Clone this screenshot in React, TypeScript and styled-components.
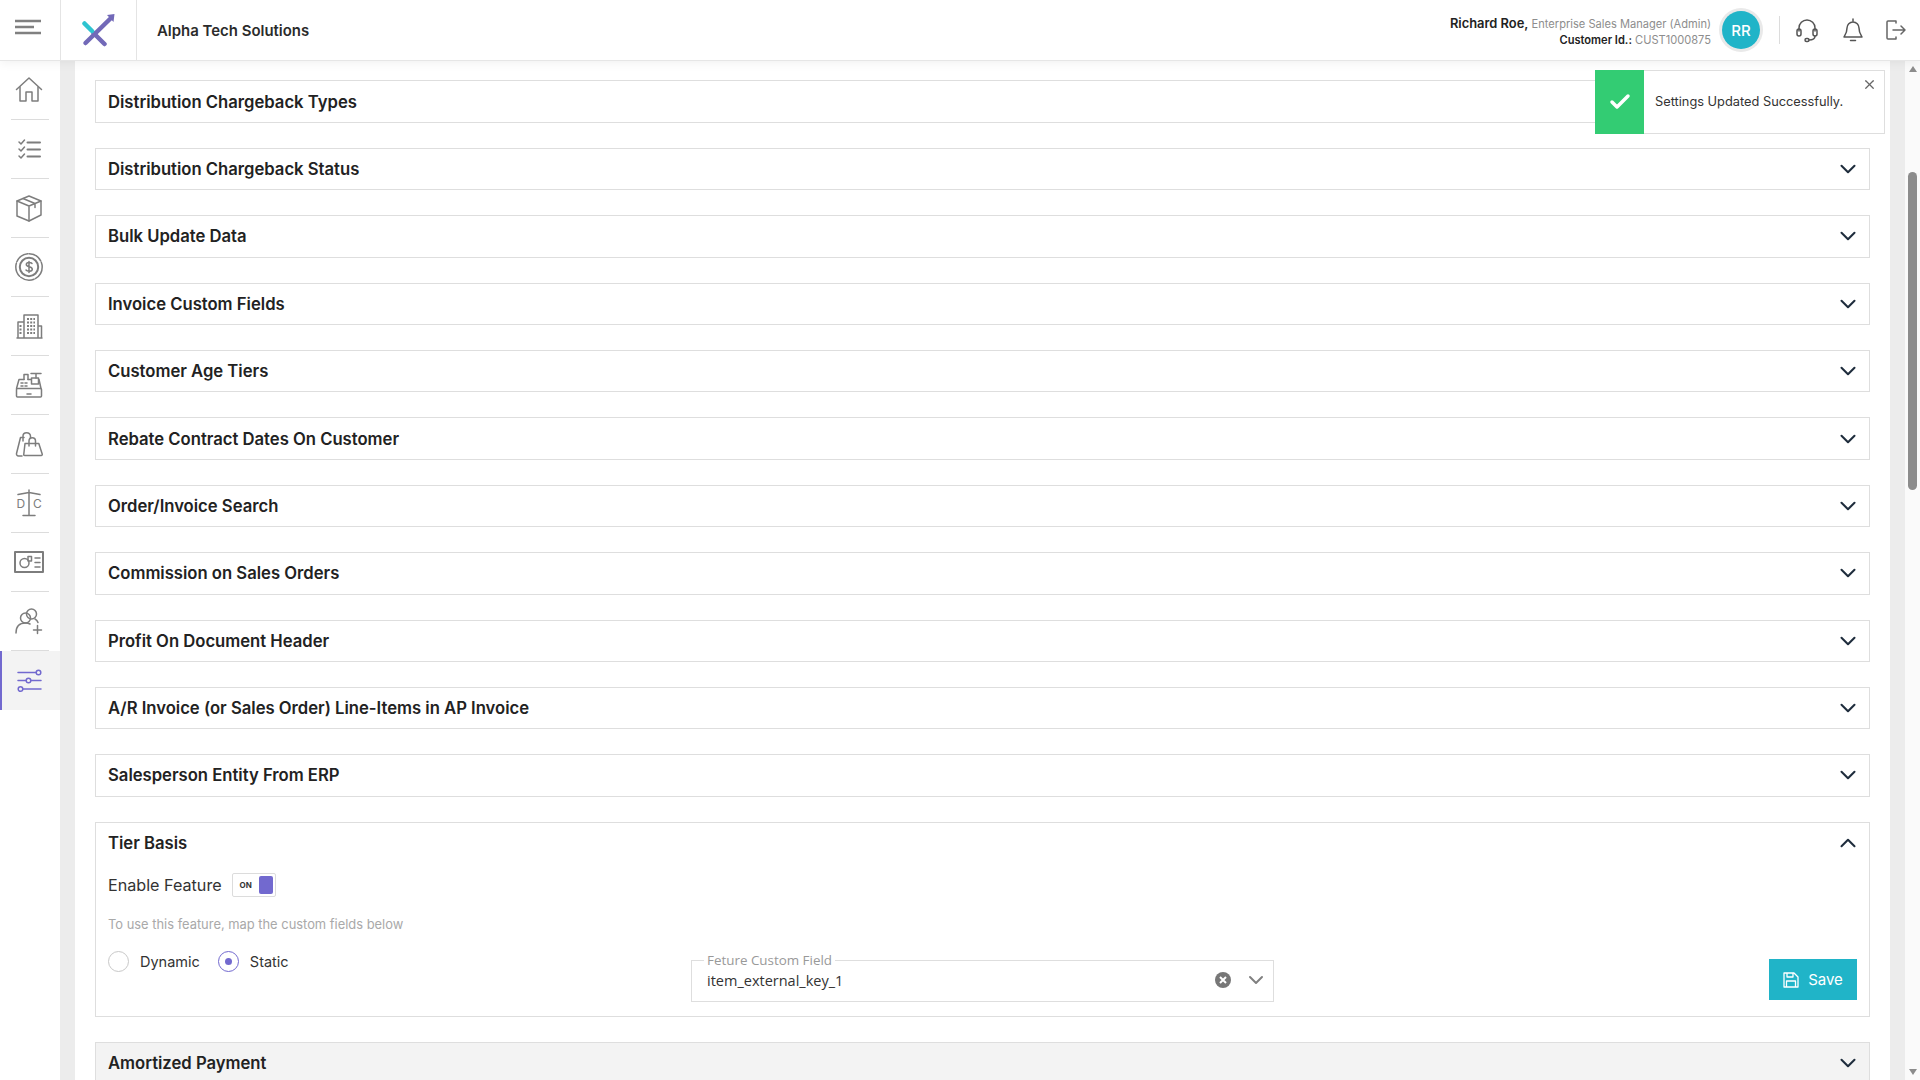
import type { ReactNode } from 'react';
import styled, { createGlobalStyle } from 'styled-components';
import { ChevronDown, ChevronUp, X, Check } from 'lucide-react';

const GlobalStyle = createGlobalStyle`
  html, body {
    margin: 0;
    padding: 0;
    height: 100%;
    overflow: hidden;
    background: #fff;
    font-family: 'Inter', 'Liberation Sans', sans-serif;
    color: #222;
  }
  * { box-sizing: border-box; }
`;

const Page = styled.div`
  width: 1920px;
  height: 1080px;
  display: flex;
  flex-direction: column;
  overflow: hidden;
  position: relative;
`;

const Header = styled.header`
  height: 61px;
  flex-shrink: 0;
  display: flex;
  align-items: stretch;
  background: #fff;
  border-bottom: 1px solid #e6e6e6;
  position: relative;
  z-index: 2;
  box-shadow: 0 2px 10px rgba(0, 0, 0, 0.06);
`;

const MenuCell = styled.div`
  width: 61px;
  border-right: 1px solid #e4e4e4;
  display: flex;
  align-items: center;
  justify-content: center;
  padding-bottom: 7px;
  padding-right: 4px;
`;

const LogoCell = styled.div`
  width: 76px;
  border-right: 1px solid #e4e4e4;
  display: flex;
  align-items: center;
  justify-content: center;
`;

const Company = styled.div`
  margin: 2px 0 0 20px;
  align-self: center;
  font-size: 14.950px;
  font-weight: 600;
  color: #2b2b2b;
`;

const UserArea = styled.div`
  margin-left: auto;
  display: flex;
  align-items: center;
`;

const UserText = styled.div`
  text-align: right;
  line-height: 16px;
  font-size: 11.100px;
  color: #8d8d8d;
  margin-right: 11px;
  padding-top: 3px;
  b { color: #222; font-weight: 600; }
  .name { font-size: 12.900px; }
`;

const Avatar = styled.div`
  width: 38px;
  height: 38px;
  border-radius: 50%;
  background: #20b4c8;
  box-shadow: 0 0 0 3px #e9e9e9;
  color: #fff;
  font-size: 15px;
  font-weight: 500;
  display: flex;
  align-items: center;
  justify-content: center;
  margin-right: 19px;
`;

const Divider = styled.div`
  width: 1px;
  height: 28px;
  background: #dcdcdc;
  margin-right: 4px;
`;

const HeaderIcon = styled.div`
  width: 46px;
  display: flex;
  justify-content: center;
  &:nth-last-child(2) { margin-right: 3px; }
  &:last-child { width: 34px; margin-right: 7px; }
`;

const Body = styled.div`
  flex: 1;
  min-height: 0;
  display: flex;
`;

const Sidebar = styled.nav`
  width: 60px;
  flex-shrink: 0;
  background: #fff;
  display: flex;
  flex-direction: column;
`;

const SideItem = styled.div<{ $active?: boolean }>`
  height: 59px;
  flex-shrink: 0;
  display: flex;
  align-items: center;
  justify-content: center;
  position: relative;
  padding: 0 4px 2px 0;
  background: ${p => (p.$active ? '#f3f3f3' : 'transparent')};
  border-left: 2px solid ${p => (p.$active ? '#7269cf' : 'transparent')};
  &::after {
    content: ${p => (p.$active ? 'none' : "''")};
    position: absolute;
    left: 9px;
    right: 11px;
    bottom: 0;
    height: 1px;
    background: #dcdcdc;
  }
`;

const Gutter = styled.div`
  width: 15px;
  flex-shrink: 0;
  background: #ececec;
`;

const Main = styled.main`
  flex: 1;
  min-width: 0;
  overflow: hidden;
  padding: 19.400px 20px 0 20px;
  background: #fff;
`;

const Row = styled.section<{ $muted?: boolean }>`
  border: 1px solid #dedede;
  background: ${p => (p.$muted ? '#f3f3f3' : '#fff')};
  margin-bottom: 25px;
`;

const RowHead = styled.div`
  height: 40.400px;
  display: flex;
  align-items: center;
  justify-content: space-between;
  padding: 0 8px 0 12px;
  font-size: 16.650px;
  font-weight: 600;
  color: #222;
`;

const TierBody = styled.div`
  padding: 8px 12px 0 12px;
  height: 152.800px;
`;

const EnableLine = styled.div`
  display: flex;
  align-items: center;
  gap: 10px;
  font-size: 16.150px;
  height: 27px;
  color: #333;
`;

const Toggle = styled.div`
  width: 44px;
  height: 24px;
  border: 1px solid #dcdcdc;
  border-radius: 2px;
  display: flex;
  align-items: center;
  justify-content: space-between;
  padding: 2px 2px 2px 7px;
  font-size: 8px;
  font-weight: 700;
  color: #333;
`;

const ToggleKnob = styled.span`
  width: 14px;
  height: 18px;
  border-radius: 2px;
  background: #7269cf;
`;

const Hint = styled.div`
  margin-top: 18px;
  font-size: 12.900px;
  line-height: 18px;
  color: #a9a9a9;
`;

const MapGrid = styled.div`
  display: grid;
  grid-template-columns: 583px 583px 1fr;
  margin-top: 8px;
  align-items: start;
`;

const RadioGroup = styled.div`
  display: flex;
  align-items: center;
  gap: 18px;
  height: 26px;
  margin-top: 6px;
`;

const RadioLabel = styled.label`
  display: flex;
  align-items: center;
  gap: 11px;
  font-size: 14.500px;
  color: #333;
`;

const RadioMark = styled.span<{ $on?: boolean }>`
  width: 21px;
  height: 21px;
  border-radius: 50%;
  border: 1px solid ${p => (p.$on ? '#7269cf' : '#c8c8c8')};
  display: flex;
  align-items: center;
  justify-content: center;
  &::after {
    content: ${p => (p.$on ? "''" : 'none')};
    width: 7px;
    height: 7px;
    border-radius: 50%;
    background: #7269cf;
  }
`;

const Field = styled.fieldset`
  margin: 11px 0 0;
  padding: 0 5px 0 15px;
  height: 49px;
  border: 1px solid #dedede;
  display: flex;
  align-items: center;
  justify-content: space-between;
  legend {
    margin-left: -3px;
    padding: 0 3px;
    font-family: 'Open Sans', sans-serif;
    font-size: 13.400px;
    line-height: 14px;
    color: #999;
  }
`;

const FieldValue = styled.div`
  font-family: 'Open Sans', sans-serif;
  font-size: 14.500px;
  color: #333;
  margin-top: -8px;
`;

const FieldIcons = styled.div`
  display: flex;
  align-items: center;
  gap: 13px;
  margin-top: -8px;
`;

const SaveButton = styled.button`
  justify-self: end;
  width: 88px;
  height: 41px;
  margin-top: 17px;
  border: 0;
  background: #20b4c8;
  color: #fff;
  font-family: inherit;
  font-size: 15px;
  display: flex;
  align-items: center;
  justify-content: center;
  gap: 9px;
`;

const ScrollTrack = styled.div`
  width: 30px;
  flex-shrink: 0;
  display: flex;
  background: #ececec;
`;

const ScrollInner = styled.div`
  margin-left: 15px;
  width: 15px;
  background: #fafafa;
  display: flex;
  flex-direction: column;
  align-items: center;
  padding: 5px 0 5px;
`;

const Arrow = styled.span<{ $down?: boolean }>`
  width: 0;
  height: 0;
  border-left: 4.500px solid transparent;
  border-right: 4.500px solid transparent;
  border-${p => (p.$down ? 'top' : 'bottom')}: 6px solid #8c8c8c;
  margin-top: ${p => (p.$down ? 'auto' : '0')};
`;

const Thumb = styled.div`
  margin-top: 100px;
  width: 9px;
  height: 318px;
  border-radius: 5px;
  background: #8c8c8c;
`;

const Toast = styled.div`
  position: absolute;
  left: 1595px;
  top: 70px;
  width: 290px;
  height: 64px;
  border: 1px solid #dedede;
  background: #fff;
  display: flex;
  align-items: center;
  z-index: 3;
  font-size: 12.800px;
  color: #333;
  padding-bottom: 2px;
`;

const ToastIcon = styled.div`
  width: 49px;
  height: 64px;
  margin: 1px 11px -1px -1px;
  background: #33cc73;
  display: flex;
  align-items: center;
  justify-content: center;
`;

const ToastClose = styled.span`
  position: absolute;
  right: 7px;
  top: 6px;
  display: flex;
`;

const gray = '#7d7d7d';

const I = ({ children, color = gray, w = 30, h = 30, sw = 1.5 }: { children: ReactNode; color?: string; w?: number; h?: number; sw?: number }) => (
  <svg width={w} height={h} viewBox={`0 0 ${w} ${h}`} fill="none" stroke={color} strokeWidth={sw} strokeLinecap="round" strokeLinejoin="round">
    {children}
  </svg>
);

const sideIcons = [
  <I key="home">
    <path d="M2.500 14.500 15 3l12.500 11.500" />
    <path d="M6 12v14h6v-9h6v9h6V12" />
  </I>,
  <I key="list">
    <path d="M5 8l2 2 3.500-4M5 15l2 2 3.500-4M5 22l2 2 3.500-4" />
    <path d="M13.500 8.500H26M13.500 15.500H26M13.500 22.500H26" strokeWidth={2} />
  </I>,
  <I key="box">
    <path d="M15 3 27 8v14l-12 6-12-5V8z" />
    <path d="M3 8l12 5 12-5M15 13v15M9 5.500l12 5v4" />
  </I>,
  <I key="coin">
    <circle cx="15" cy="15" r="13.200" strokeDasharray="14 1.500" />
    <circle cx="15" cy="15" r="9.200" strokeWidth={2} />
    <path d="M18 11.500c-1-1.200-5.500-1.600-5.700 1 0 3 6 1.500 6 4.700 0 2.600-5 2.400-6.300.8M15 9.500v11" />
  </I>,
  <I key="building">
    <path d="M4 27V11h6M10 27V4h14v23M24 15h3.500v12M3 27h25" />
    <path d="M13 8h8M13 11.500h8M13 15h8M13 18.500h8M13 22h8" strokeWidth={2} strokeDasharray="2 1.200" strokeLinecap="butt" />
    <path d="M6.500 14v10" strokeWidth={2} strokeDasharray="2 1.500" strokeLinecap="butt" />
  </I>,
  <I key="register">
    <path d="M2.500 18.500 5 9.500h5M14 9.500h3M25 9.500l2 9" />
    <rect x="2.500" y="18.500" width="25" height="8.500" rx="1" />
    <path d="M10 9.500V4.500h4v5M17 3.500h10M22 3.500V8" />
    <rect x="17.500" y="8" width="7" height="6" />
    <path d="M7 13h2M11 13h2M7 16h2M11 16h2M13 24h4" />
  </I>,
  <I key="bags">
    <path d="M10 8.500H6.500L2.500 24.500c-.3 1.500.8 2.500 2 2.500H8" />
    <path d="M9 12V7c0-4.500 7-4.500 7.500 0v2" />
    <path d="M11 14.500h13.800l3.400 10.500c.3 1-.3 1.500-1 1.500H10.800c-1 0-1.300-.7-1-1.500z" />
    <path d="M15 17v-5c0-4.500 6.500-4.500 6.500 0v5" />
  </I>,
  <I key="scale">
    <path d="M15 2v25M9 27.500h12M4 6.500l11-2 11 2" />
    <text x="2.500" y="20" fontSize="12" fontFamily="Inter, sans-serif" fill={gray} stroke="none">D</text>
    <text x="19" y="20" fontSize="12" fontFamily="Inter, sans-serif" fill={gray} stroke="none">C</text>
  </I>,
  <I key="card">
    <rect x="1" y="5" width="28" height="20" strokeWidth={2} strokeLinecap="butt" />
    <circle cx="10.500" cy="16" r="4.500" />
    <path d="M14 9.500h3.500V14H14zM21 11h5M21 15.500h5M21 20h5" />
  </I>,
  <I key="userplus">
    <circle cx="17.500" cy="8" r="5" />
    <circle cx="11.500" cy="12" r="5" />
    <path d="M2 27c0-6 3-10 9.500-10 2 0 3.500.4 4.500 1M21 13c1.500.8 2.500 2 3 3.500M23.500 19.500v8M19.500 24h8" />
  </I>,
];

const ITEMS = [
  'Distribution Chargeback Types',
  'Distribution Chargeback Status',
  'Bulk Update Data',
  'Invoice Custom Fields',
  'Customer Age Tiers',
  'Rebate Contract Dates On Customer',
  'Order/Invoice Search',
  'Commission on Sales Orders',
  'Profit On Document Header',
  'A/R Invoice (or Sales Order) Line-Items in AP Invoice',
  'Salesperson Entity From ERP',
];

export default function App() {
  return (
    <Page>
      <GlobalStyle />
      <Header>
        <MenuCell>
          <I w={28} h={16} sw={2.400} color="#808080">
            <path d="M1 2h26M1 8h19M1 14h26" strokeLinecap="butt" />
          </I>
        </MenuCell>
        <LogoCell>
          <svg width="34" height="34" viewBox="0 0 34 34" fill="none" strokeLinecap="round">
            <path d="M3.500 30 29 5" stroke="#7269b8" strokeWidth="4.500" />
            <path d="M25 2 32.500 1l-1 8z" fill="#7269b8" />
            <path d="M11.500 20l11 11" stroke="#7269b8" strokeWidth="4.500" />
            <path d="M2.500 10.500 10 18" stroke="#2ec4d0" strokeWidth="4.500" />
          </svg>
        </LogoCell>
        <Company>Alpha Tech Solutions</Company>
        <UserArea>
          <UserText>
            <div><b className="name">Richard Roe,</b> Enterprise Sales Manager (Admin)</div>
            <div><b>Customer Id.:</b> CUST1000875</div>
          </UserText>
          <Avatar>RR</Avatar>
          <Divider />
          <HeaderIcon>
            <I w={24} h={26} color="#555">
              <path d="M4 14v-3a8 8 0 0 1 16 0v3" />
              <rect x="2" y="12" width="4" height="7" rx="2" />
              <rect x="18" y="12" width="4" height="7" rx="2" />
              <path d="M20 19c0 3-3 4-6 4" />
              <rect x="10" y="21.500" width="4" height="3" rx="1.500" />
            </I>
          </HeaderIcon>
          <HeaderIcon>
            <I w={24} h={26} color="#555">
              <path d="M12 2v2M6 11a6 6 0 0 1 12 0c0 6 3 8 3 9H3c0-1 3-3 3-9zM9.500 23.500h5" />
            </I>
          </HeaderIcon>
          <HeaderIcon>
            <I w={22} h={24} color="#666">
              <path d="M11 5V3H3a1 1 0 0 0-1 1v16a1 1 0 0 0 1 1h8v-2M8 12h12M16 8l4 4-4 4" />
            </I>
          </HeaderIcon>
        </UserArea>
      </Header>
      <Body>
        <Sidebar>
          {sideIcons.map(icon => (
            <SideItem key={icon.key}>{icon}</SideItem>
          ))}
          <SideItem $active>
            <I color="#7269cf">
              <path d="M4 7.500h18M4 15.500h8M17 15.500h10M9 24h18" />
              <circle cx="24.500" cy="7.500" r="2.300" />
              <circle cx="14.500" cy="15.500" r="2.300" />
              <circle cx="6.500" cy="24" r="2.300" />
            </I>
          </SideItem>
        </Sidebar>
        <Gutter />
        <Main>
          {ITEMS.map(name => (
            <Row key={name}>
              <RowHead>
                {name}
                <ChevronDown size={26} strokeWidth={1.900} color="#1f2d3d" />
              </RowHead>
            </Row>
          ))}
          <Row>
            <RowHead>
              Tier Basis
              <ChevronUp size={26} strokeWidth={1.900} color="#1f2d3d" />
            </RowHead>
            <TierBody>
              <EnableLine>
                Enable Feature
                <Toggle>
                  ON
                  <ToggleKnob />
                </Toggle>
              </EnableLine>
              <Hint>To use this feature, map the custom fields below</Hint>
              <MapGrid>
                <RadioGroup>
                  <RadioLabel><RadioMark />Dynamic</RadioLabel>
                  <RadioLabel><RadioMark $on />Static</RadioLabel>
                </RadioGroup>
                <Field>
                  <legend>Feture Custom Field</legend>
                  <FieldValue>item_external_key_1</FieldValue>
                  <FieldIcons>
                    <svg width="16" height="16" viewBox="0 0 16 16">
                      <circle cx="8" cy="8" r="8" fill="#777" />
                      <path d="M5 5l6 6M11 5l-6 6" stroke="#fff" strokeWidth="2" />
                    </svg>
                    <ChevronDown size={24} strokeWidth={2} color="#808080" />
                  </FieldIcons>
                </Field>
                <SaveButton>
                  <I w={16} h={16} color="#fff" sw={1.300}>
                    <path d="M1 1h10l4 4v10H1zM4 1v4h6V1M3.500 15V9h9v6" />
                  </I>
                  Save
                </SaveButton>
              </MapGrid>
            </TierBody>
          </Row>
          <Row $muted>
            <RowHead>
              Amortized Payment
              <ChevronDown size={26} strokeWidth={1.900} color="#1f2d3d" />
            </RowHead>
          </Row>
        </Main>
        <ScrollTrack>
          <ScrollInner>
            <Arrow />
            <Thumb />
            <Arrow $down />
          </ScrollInner>
        </ScrollTrack>
      </Body>
      <Toast>
        <ToastIcon>
          <Check size={24} strokeWidth={3.500} color="#fff" />
        </ToastIcon>
        Settings Updated Successfully.
        <ToastClose>
          <X size={15} strokeWidth={2} color="#666" />
        </ToastClose>
      </Toast>
    </Page>
  );
}
